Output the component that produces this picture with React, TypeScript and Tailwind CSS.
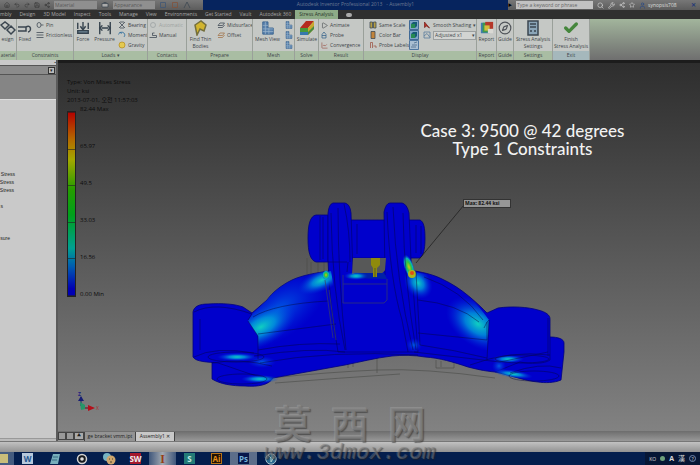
import type { ReactNode } from "react";
import {
  Search, Star, User, Wrench, Undo2, Redo2, Home, Save, Check, Compass, Share2, Play, LineChart,
} from "lucide-react";

type Kids = { children?: ReactNode };

function Group({ label, width, green = true, children }: Kids & { label: string; width: string; green?: boolean }) {
  return (
    <section className={`flex shrink-0 flex-col border-r border-[#9aa09a] ${width}`}>
      <div className="flex h-8 items-start gap-1 overflow-hidden px-px">{children}</div>
      <div className={`h-[9px] overflow-hidden whitespace-nowrap text-center leading-[8px] ${green ? "bg-[#a9bda3]" : "bg-[#a5b8bc]"}`}>
        {label}
      </div>
    </section>
  );
}

function Big({ icon, children, width = "w-5" }: Kids & { icon: ReactNode; width?: string }) {
  return (
    <button type="button" className={`flex shrink-0 flex-col items-center pt-px ${width}`}>
      <span className="flex h-4 w-4 items-center justify-center">{icon}</span>
      <span className="whitespace-nowrap text-center leading-[7px]">{children}</span>
    </button>
  );
}

function Small({ icon, children, faded = false }: Kids & { icon: ReactNode; faded?: boolean }) {
  return (
    <button type="button" className={`flex h-[10px] items-center gap-[2px] whitespace-nowrap ${faded ? "opacity-30" : ""}`}>
      <span className="flex h-2 w-2 items-center justify-center">{icon}</span>
      <span>{children}</span>
    </button>
  );
}

function Glyph({ d, stroke = "#3b4650", fill = "none", className = "h-2 w-2" }: { d: string; stroke?: string; fill?: string; className?: string }) {
  return (
    <svg viewBox="0 0 16 16" className={className} aria-hidden="true">
      <path d={d} stroke={stroke} fill={fill} strokeWidth="1.5" />
    </svg>
  );
}

function Column({ children }: Kids) {
  return <div className="flex shrink-0 flex-col pt-px">{children}</div>;
}

function MeshIcon({ className = "h-2 w-2" }: { className?: string }) {
  return (
    <svg viewBox="0 0 16 16" className={className} aria-hidden="true">
      <path d="M2 1h6v7h6v7H2z" fill="#5a82ad" stroke="#38618e" />
      <path d="M2 5h6M2 9h12M2 12h12M5 1v14M9 8v7" stroke="#9bb5cc" strokeWidth="0.8" />
    </svg>
  );
}

function CubeIcon({ className = "h-4 w-4" }: { className?: string }) {
  return (
    <svg viewBox="0 0 16 16" className={className} aria-hidden="true">
      <path d="M1 8 7 1h8L9 8z" fill="#b52c1f" />
      <path d="M1 8h8v7H1z" fill="#48993a" />
      <path d="M1 12h8v3H1z" fill="#3678ad" />
      <path d="M9 8l6-7v8l-6 6z" fill="#c9a92e" />
      <path d="M9 12l6-6v3l-6 6z" fill="#4a8a42" />
    </svg>
  );
}

function ReportIcon() {
  return (
    <svg viewBox="0 0 16 16" className="h-[14px] w-[14px]" aria-hidden="true">
      <path d="M1 2h10v12H1z" fill="#3f7db0" />
      <path d="M3 2h10v11H3z" fill="#3f9a4c" />
      <path d="M6 1h9v8H6z" fill="#b5382a" />
      <path d="M5 5h6v6H5z" fill="#d3bd3d" />
      <path d="M9 9h6v5H9z" fill="#d9d9d4" />
    </svg>
  );
}

function ScreenIcon() {
  return (
    <svg viewBox="0 0 10 10" className="h-[10px] w-[10px]" aria-hidden="true">
      <path d="M.5 .5h9v9h-9z" fill="#7fa5c8" stroke="#406a96" />
      <path d="M2 4 4 2h4v4L6 8H2z" fill="#175c73" />
      <path d="M2 4h4v4H2z" fill="#268a53" />
    </svg>
  );
}

function PaleScreenIcon() {
  return (
    <svg viewBox="0 0 10 10" className="h-[10px] w-[10px]" aria-hidden="true">
      <path d="M.5 .5h9v9h-9z" fill="#a9bfd2" stroke="#4d769f" />
      <path d="M2 7h5M3 5h5M5 3l3-1" stroke="#5c7b98" fill="none" />
    </svg>
  );
}

function ForceIcon({ double = false }: { double?: boolean }) {
  return (
    <svg viewBox="0 0 16 16" className="h-[14px] w-[14px]" aria-hidden="true">
      <path d={double ? "M2 1v14M14 1v14M4 8h8" : "M2 11h12v3H2zM8 1v8"} stroke="#36434e" fill="#6f8797" strokeWidth="1.6" />
      <path d={double ? "M5 5l-3 3 3 3M11 5l3 3-3 3" : "M5 6l3 4 3-4M2 2v7M14 2v7"} stroke="#36434e" fill="none" strokeWidth="1.6" />
    </svg>
  );
}

const menus = ["Design", "3D Model", "Inspect", "Tools", "Manage", "View", "Environments", "Get Started", "Vault", "Autodesk 360"];

function TitleBar() {
  return (
    <header className="flex h-[10px] items-center bg-linear-to-b from-[#777] to-[#5c5c5c] text-[#333]">
      <div className="flex w-[203px] shrink-0 items-center gap-[4px] pl-[4px]">
        <Home size={6} /><Undo2 size={6} /><Redo2 size={6} /><Save size={6} /><Share2 size={6} />
        <select aria-label="Material" className="h-2 w-[43px] appearance-none bg-[#8f8f8f] px-px text-[5px] leading-[8px] text-[#5a5a5a]">
          <option>Material</option>
        </select>
        <Glyph d="M2 5h12v7H2zM5 3h6" fill="#aaa" />
        <select aria-label="Appearance" className="h-2 w-[42px] appearance-none bg-[#8f8f8f] px-px text-[5px] leading-[8px] text-[#5a5a5a]">
          <option>Appearance</option>
        </select>
        <Glyph d="M3 3h10v10H3z" stroke="#3e5576" />
        <Glyph d="M3 3h10v10H3z" stroke="#835139" />
        <Glyph d="M2 14 8 2l6 12" />
      </div>
      <h1 className="h-[10px] min-w-0 flex-1 overflow-hidden whitespace-nowrap bg-[#06245e] text-center text-[5px] leading-[9px] text-[#6c7a94]">
        Autodesk Inventor Professional 2013 &nbsp; - Assembly1
      </h1>
      <div className="flex w-[192px] shrink-0 items-center gap-1 text-[#ddd]">
        <span className="text-[4px] text-black">▶</span>
        <input aria-label="Search help" placeholder="Type a keyword or phrase" className="h-2 w-[77px] bg-[#c2c2c2] px-px text-[5px] leading-[8px] placeholder:text-[#666]" />
        <Search size={7} /><Wrench size={7} /><Share2 size={6} /><Star size={6} />
        <User size={7} className="text-[#23488a]" />
        <span className="-ml-0.5 text-[5px] leading-[8px]">synopsis708</span>
        <span className="ml-auto mr-1 text-[6px] font-bold leading-[8px] text-[#243a78]">✕</span>
      </div>
    </header>
  );
}

function Ribbon() {
  return (
    <div className="flex h-[41px] bg-linear-to-b from-[#a2b59c] to-[#6f6f6f] text-[#41464a]">
      <div className="flex shrink-0 bg-[#c5c8c5]">
        <Group label="aterial" width="w-[17px]">
          <Big width="w-[13px]" icon={<Glyph className="h-4 w-4" d="M1 5l4-3 4 3-4 4zM7 10l4-4 4 4-4 4z" />}>esign</Big>
        </Group>
        <Group label="Constraints" width="w-[57px]">
          <Big width="w-[14px]" icon={<Glyph className="h-4 w-4" d="M1 7h8v4H1M9 7c5-3 6 4 2 5" />}>Fixed</Big>
          <Column>
            <Small icon={<Glyph d="M2 8a4 5 0 108 0 4 5 0 10-8 0M10 8h5" />}>Pin</Small>
            <Small icon={<Glyph d="M1 3h14M1 8h14M1 13h14" />}>Frictionless</Small>
          </Column>
        </Group>
        <Group label="Loads  ▾" width="w-[74px]">
          <Big width="w-4" icon={<ForceIcon />}>Force</Big>
          <Big width="w-[19px]" icon={<ForceIcon double />}>Pressure</Big>
          <Column>
            <Small icon={<Glyph d="M2 2l12 12M14 2 2 14M4 2h8M4 14h8" />}>Bearing</Small>
            <Small icon={<Glyph d="M4 4a5 5 0 118 8M1 7l3-5 4 3" stroke="#24679a" />}>Moment</Small>
            <Small icon={<Glyph d="M2 8a6 6 0 1012 0 6 6 0 10-12 0" fill="#e4ca51" stroke="#b58e20" />}>Gravity</Small>
          </Column>
        </Group>
        <Group label="Contacts" width="w-[39px]">
          <Column>
            <Small faded icon={<Glyph d="M3 8a5 5 0 1010 0 5 5 0 10-10 0" />}>Automatic</Small>
            <Small icon={<Glyph d="M1 13h14v-4H7V4h4" />}>Manual</Small>
          </Column>
        </Group>
        <Group label="Prepare" width="w-[66px]">
          <Big width="w-[25px]" icon={<Glyph className="h-4 w-4" d="M2 5 8 1l5 4-2 6-4-2-3 6z" fill="#d2b52f" stroke="#756f3c" />}>Find Thin<br />Bodies</Big>
          <Column>
            <Small icon={<Glyph d="M2 9 6 4h9l-4 5zM2 13h9l4-5" />}>Midsurface</Small>
            <Small icon={<Glyph d="M2 9 6 4h9l-4 5zM2 13h9l4-5" stroke="#a17245" />}>Offset</Small>
          </Column>
        </Group>
        <Group label="Mesh" width="w-[42px]">
          <Big width="w-[27px]" icon={<MeshIcon className="h-[14px] w-[14px]" />}>Mesh View</Big>
          <Column>
            {["Mesh settings", "Local mesh", "Convergence settings"].map((name) => (
              <button key={name} type="button" aria-label={name} className="flex h-[10px] items-center"><MeshIcon /></button>
            ))}
          </Column>
        </Group>
        <Group label="Solve" width="w-6">
          <Big width="w-[22px]" icon={<CubeIcon />}>Simulate</Big>
        </Group>
        <Group label="Result" width="w-[45px]">
          <Column>
            <Small icon={<Play size={7} />}>Animate</Small>
            <Small icon={<Glyph d="M4 14V7l4-5 4 5v7zM4 9h8" stroke="#35638b" />}>Probe</Small>
            <Small icon={<LineChart size={7} color="#94483d" />}>Convergence</Small>
          </Column>
        </Group>
        <Group label="Display" width="w-[113px]">
          <div className="w-px" />
          <div className="w-[36px]">
            <Column>
              <Small icon={<Glyph d="M2 2h5v12H2zM9 2h5v12H9z" fill="#b59d43" />}>Same Scale</Small>
              <Small icon={<Glyph d="M4 1h8v14H4z" fill="#c3843b" />}>Color Bar</Small>
              <Small icon={<Glyph d="M3 14V3h4v11M9 10h5v4" stroke="#9c5142" />}>Probe Labels</Small>
            </Column>
          </div>
          <Column>
            <button type="button" aria-label="Maximum value"><ScreenIcon /></button>
            <button type="button" aria-label="Minimum value"><ScreenIcon /></button>
            <button type="button" aria-label="Boundary conditions"><PaleScreenIcon /></button>
          </Column>
          <Column>
            <Small icon={<Glyph d="M3 2v11l4-3 6 4z" fill="#b83025" stroke="#7b2620" />}>Smooth Shading ▾</Small>
            <div className="flex h-[10px] items-center gap-[2px]">
              <Glyph d="M2 2h12v12H2zM2 10 8 5l6 8" stroke="#55799b" />
              <div className="flex h-[9px] w-[43px] items-center border border-[#9ca0a0] bg-[#d2d4d2]">
                <select aria-label="Displacement scale" className="h-[7px] flex-1 appearance-none px-px text-[5px] leading-[7px]">
                  <option>Adjusted x1</option>
                </select>
                <span aria-hidden="true">▾</span>
              </div>
            </div>
          </Column>
        </Group>
        <Group label="Report" width="w-5">
          <Big width="w-[17px]" icon={<ReportIcon />}>Report</Big>
        </Group>
        <Group label="Guide" width="w-[17px]">
          <Big width="w-[14px]" icon={<Compass size={14} color="#50545a" strokeWidth={2} />}>Guide</Big>
        </Group>
        <Group label="Settings" width="w-[39px]">
          <Big width="w-[36px]" icon={<Glyph className="h-4 w-4" d="M3 1h10v14H3zM5 4h6M5 7h6M5 11h2M9 11h2" fill="#8ba5b8" />}>Stress Analysis<br />Settings</Big>
        </Group>
        <Group label="Exit" width="w-[37px]" green={false}>
          <Big width="w-[34px]" icon={<Check size={16} color="#45863c" strokeWidth={5} />}>Finish<br />Stress Analysis</Big>
        </Group>
      </div>
    </div>
  );
}

function Model() {
  return (
    <svg viewBox="58 63 642 368" className="absolute inset-0 h-full w-full" role="img" aria-label="Bracket stress model">
      <defs>
        <radialGradient id="glow"><stop offset="0" stopColor="#10cfc0" /><stop offset="0.4" stopColor="#00a0dc" stopOpacity="0.8" /><stop offset="1" stopColor="#0030e0" stopOpacity="0" /></radialGradient>
        <radialGradient id="haze"><stop offset="0" stopColor="#0070e8" stopOpacity="0.8" /><stop offset="1" stopColor="#0030e0" stopOpacity="0" /></radialGradient>
        <radialGradient id="hot"><stop offset="0" stopColor="#d3c20d" /><stop offset="0.4" stopColor="#2cc544" /><stop offset="0.7" stopColor="#08aebd" /><stop offset="1" stopColor="#003ce0" stopOpacity="0" /></radialGradient>
        <clipPath id="leftArm"><path d="M331 271C315 273 303 275 292 280C280 286 272 293 267 300L252 314 248 321 258 336V350H340L336 300z" /></clipPath>
        <clipPath id="rightArm"><path d="M403 258H412L415 272C426 274 434 275 442 279C462 288 478 304 489 320L487 352 410 350z" /></clipPath>
      </defs>
      <g fill="none" stroke="#4a4c48" strokeWidth="0.6">
        <path d="M270 378Q330 372 377 370T495 378M275 383Q340 378 400 374M377 358v15M436 360v8h18v-8M441 361v6M348 352v16M353 352v15M307 258v16M311 262v14M318 262v12M324 262v10" />
      </g>
      <g fill="#0000cc" stroke="#000080" strokeWidth="0.8">
        <path d="M212 361V379C220 384 232 386 245 386C258 387 269 385 273 378L274 360z" />
        <path d="M550 337C558 337 564 339 564 343V352L561 380C554 383 545 383 538 382C525 381 510 375 495 372L500 352z" />
        <path d="M193 357V312C194 306 200 304 208 304C222 303 235 304 243 307L252 313 267 300C272 293 280 286 292 280C303 275 315 273 330 271H415C426 273 434 275 442 279C462 288 478 304 487 313L498 308C512 306 528 307 538 310C546 312 550 315 550 319V360C545 364 530 364 520 362L495 372C484 371 476 369 468 367C453 362 440 358 425 357C414 355 402 355 392 356C375 358 360 362 345 365L273 378C260 379 240 370 218 363C208 362 196 362 193 357z" />
        <path d="M348 220H390V258H348z" />
        <path d="M328 215H316C310 216 308 225 308 238C308 252 310 260 316 262H328z" />
        <path d="M405 220H420C424 222 425 228 425 239C425 250 423 256 420 258H405z" />
        <path d="M328 213Q329 204 333 203H345Q350 204 351 213L353 275H385L384 212Q386 203 390 203H402Q407 204 409 213L411 260 418 352H345L338 352Q329 300 328 260z" />
      </g>
      <path d="M353 258h33l-1 12q-2 4-7 4h-26z" fill="#575858" />
      <path d="M347 278 355 273h29l3 6z" fill="#0020a8" />
      <g clipPath="url(#leftArm)">
        <ellipse cx="278" cy="310" rx="56" ry="28" transform="rotate(-35 278 310)" fill="url(#haze)" />
        <ellipse cx="261" cy="327" rx="38" ry="19" transform="rotate(-28 261 327)" fill="url(#glow)" />
        <ellipse cx="322" cy="280" rx="26" ry="11" transform="rotate(-25 322 280)" fill="url(#glow)" />
      </g>
      <g clipPath="url(#rightArm)">
        <ellipse cx="478" cy="324" rx="36" ry="22" transform="rotate(35 478 324)" fill="url(#glow)" />
        <ellipse cx="418" cy="283" rx="13" ry="17" transform="rotate(-35 418 283)" fill="url(#glow)" />
      </g>
      <ellipse cx="409" cy="267" rx="5" ry="13" transform="rotate(-18 409 267)" fill="url(#hot)" />
      <circle cx="412" cy="274" r="4" fill="#a8b71c" />
      <circle cx="412" cy="273" r="2" fill="#df4e12" />
      <ellipse cx="326" cy="275" rx="4" ry="5" fill="url(#hot)" />
      <g fill="url(#glow)">
        <ellipse cx="237" cy="357" rx="20" ry="4" /><ellipse cx="260" cy="379" rx="19" ry="4" />
        <ellipse cx="508" cy="359" rx="16" ry="4" /><ellipse cx="513" cy="374" rx="20" ry="4" transform="rotate(8 513 374)" />
        <ellipse cx="356" cy="276" rx="12" ry="4" />
      </g>
      <g fill="url(#haze)"><ellipse cx="499" cy="366" rx="7" ry="7" /><ellipse cx="262" cy="362" rx="14" ry="6" /><ellipse cx="414" cy="345" rx="8" ry="7" /></g>
      <g fill="none" stroke="#06063a" strokeWidth="0.6" opacity="0.75">
        <path d="M194 312Q215 301 252 314M200 319v31M194 357Q215 346 254 353M212 363Q240 358 272 366M248 321 258 336V359M252 314 248 320M258 334 336 324M253 317Q274 304 328 301M331 213Q332 290 345 350M338 208Q338 280 346 350M344 204Q350 230 350 262M320 216v44M323 217v42M348 262 347 272M258 350Q300 342 340 344M254 356Q310 347 345 352M260 363Q330 350 418 355M387 212Q390 280 402 320L408 352M393 207Q396 280 413 350M403 213Q404 280 416 350M416 272 420 345M418 300Q458 304 479 322M418 333 487 340V322L489 320M420 345Q455 350 487 358M487 322 484 328M489 320 487 360M424 277Q462 290 483 320M414 352 500 362 548 352M470 365Q510 350 550 355M510 373Q540 362 561 368M548 318v38M357 224v30M416 225v28M421 226v28M328 262H347" />
        <ellipse cx="236" cy="357" rx="28" ry="5" /><ellipse cx="242" cy="379" rx="25" ry="5" /><ellipse cx="522" cy="359" rx="27" ry="4" /><ellipse cx="534" cy="376" rx="25" ry="5" />
      </g>
      <g fill="none" stroke="#383d6a" strokeWidth="0.7">
        <path d="M343 275V303H384L387 300V279M343 284H387M325 280 333 338M329 290 336 340" />
      </g>
      <path d="M371 258h9v7l-3 3v9h-4v-9l-2-3z" fill="#8f8a0c" />
      <path d="M375 268v9" stroke="#575d18" />
      <path d="M416 263 464 205" stroke="#222" strokeWidth="0.8" />
      <path d="M81 406V397M81 408h10" stroke="#263c68" strokeWidth="1.2" />
      <path d="M83 408h8" stroke="#9a2020" />
      <path d="m78 401 3-5 3 5z" fill="#171d73" />
      <path d="m80 402 5 3v4l-4 1z" fill="#259769" />
      <path d="m88 405 7 3-7 3z" fill="#b50f1a" />
    </svg>
  );
}

const legend = ["82.44 Max", "65.97", "49.5", "33.03", "16.56", "0.00 Min"];

function Viewport() {
  return (
    <div className="relative min-h-0 flex-1 overflow-hidden bg-linear-to-b from-[#2e2e2e] via-[#575757] to-[#828282]">
      <Model />
      <div className="absolute left-[9px] top-[15px] text-[6px] leading-[9px] text-[#0c0c0c]">
        <p>Type: Von Mises Stress</p>
        <p>Unit: ksi</p>
        <p>2013-07-01, 오전 11:57:03</p>
        <div className="mt-[6px] flex h-[186px] gap-1">
          <div className="flex w-[9px] flex-col justify-between border border-[#222] bg-[linear-gradient(#b40000,#b46a00_15%,#a3a800_26%,#269c00_42%,#00a01c_56%,#00a092_74%,#005bb0_84%,#0000b4_96%)]">
            {legend.map((v) => <span key={v} className="h-px bg-[#222]/60" />)}
          </div>
          <ul className="-mb-0.5 -mt-1.5 flex flex-col justify-between">
            {legend.map((v) => <li key={v}>{v}</li>)}
          </ul>
        </div>
      </div>
      <div className="absolute left-[343px] top-[59px] w-[243px] whitespace-nowrap text-center font-[Lato,sans-serif] text-[17px] font-medium leading-[18px] text-[#f2f2f2]">
        <p>Case 3: 9500 @ 42 degrees</p>
        <p>Type 1 Constraints</p>
      </div>
      <p className="absolute left-[405px] top-[136px] h-[9px] w-[48px] border border-[#333] bg-[#969696] px-px text-[5px] font-bold leading-[7px] text-[#111]">
        Max: 82.44 ksi
      </p>
      <span className="absolute left-[20px] top-[328px] text-[5px] font-bold leading-[6px] text-[#202080]">Z</span>
      <span className="absolute left-[38px] top-[342px] text-[5px] leading-[6px] text-[#a63030]">X</span>
    </div>
  );
}

const tree = [
  { text: "Stress", gap: "mt-[70px] w-[15px]" },
  { text: "Stress", gap: "w-[14px]" },
  { text: "Stress", gap: "w-[14px]" },
  { text: "s", gap: "mt-2 w-[3px]" },
  { text: "sure", gap: "mt-6 w-[10px]" },
];

function Browser() {
  return (
    <aside className="flex w-[58px] shrink-0 flex-col border-r-2 border-[#5b5b5b] bg-[#c9c9c9] font-['Liberation_Sans',sans-serif] text-[5px] text-[#222]">
      <div className="flex h-[5px] justify-end text-[4px] leading-[5px]">▪</div>
      <div className="flex h-[10px] items-center justify-end border-y border-[#555] bg-[#8b8b8b] pr-px">
        <button type="button" aria-label="Filter" className="flex h-[7px] w-[7px] items-center justify-center border border-[#333] bg-[#bbb] text-[5px] leading-[5px]">▾</button>
      </div>
      <div className="h-6 bg-[#858585]" />
      <ul className="flex min-h-0 flex-1 flex-col border-t border-[#ddd]">
        {tree.map((row, i) => (
          <li key={i} className={`flex h-2 shrink-0 items-center justify-end whitespace-nowrap ${row.gap}`}>{row.text}</li>
        ))}
      </ul>
      <div className="h-[3px] border-t border-[#999] bg-[#bbb]" />
    </aside>
  );
}

function Taskbar() {
  const cell = "flex h-[13px] w-[27px] shrink-0 items-center justify-center";
  const lit = "bg-linear-to-r from-[#40577b] via-[#a3a9b0] to-[#40577b]";
  const tile = "flex h-[11px] w-[11px] items-center justify-center text-[8px] font-bold leading-[10px]";
  return (
    <footer className="flex h-[13px] items-center overflow-hidden bg-[#041e4d]">
      <nav aria-label="Taskbar" className="flex">
        <button type="button" aria-label="Files" className="flex h-[13px] w-[14px] items-center bg-[#445b7f]"><span className="h-[9px] w-2 bg-[#c9bd7a]" /></button>
        <button type="button" className={cell}><span className={`${tile} bg-[#b6c8dc] text-[#25558f]`}>W</span></button>
        <button type="button" aria-label="Notes" className={cell}><svg viewBox="0 0 12 12" className="h-3 w-3"><path d="M4 1h7l-2 10H1z" fill="#77aebb" /><path d="M4 4h5M3 7h5" stroke="#376c83" /></svg></button>
        <button type="button" aria-label="Target" className={cell}><svg viewBox="0 0 12 12" className="h-3 w-3"><circle cx="6" cy="6" r="4.5" fill="#17191d" stroke="#d3d3d3" strokeWidth="1.5" /><circle cx="6" cy="6" r="1.8" fill="#ddd" /></svg></button>
        <button type="button" aria-label="Messenger" className={cell}><svg viewBox="0 0 14 12" className="h-3 w-[14px]"><circle cx="5" cy="4" r="4" fill="#75b3c2" /><circle cx="9" cy="7" r="4.5" fill="#cda56d" /><path d="M7 6h1M10 6h1M8 9h2" stroke="#443" /></svg></button>
        <button type="button" className={cell}><span className={`${tile} bg-[#a5192d] text-[7px] text-[#eee]`}>SW</span></button>
        <button type="button" className={`${cell} ${lit}`}><span className={`${tile} font-['Liberation_Serif',serif] text-[12px] text-[#963e16]`}>I</span></button>
        <button type="button" className={cell}><span className={`${tile} bg-[#237b77] text-[#c3eae2]`}>S</span></button>
        <button type="button" className={cell}><span className={`${tile} border border-[#b57317] bg-[#211204] text-[7px] text-[#e58f18]`}>Ai</span></button>
        <button type="button" className={`${cell} bg-[#5c6e8a]`}><span className={`${tile} bg-[#07184b] text-[7px] text-[#74b1d9]`}>Ps</span></button>
        <button type="button" aria-label="Globe" className={cell}><svg viewBox="0 0 12 12" className="h-3 w-3"><circle cx="6" cy="6" r="5.2" fill="#2b6a91" stroke="#a9c1cc" /><path d="M3 2l3 3v4l3-5" stroke="#aed0ce" fill="none" /></svg></button>
      </nav>
      <div className="ml-auto flex h-full items-center gap-1 bg-[#061635] px-1 text-[7px] leading-[10px] text-[#dadada]">
        <span className="text-[5px]">KO</span>
        <span className="h-[5px] w-[5px] rounded-full bg-[#6d9f7b]" />
        <span className="font-bold">A</span>
        <span>漢</span>
        <span className="flex h-[7px] w-[7px] items-center justify-center rounded-full border border-[#7188ae] text-[5px]">?</span>
      </div>
    </footer>
  );
}

export default function App() {
  return (
    <div className="relative flex h-screen flex-col overflow-hidden bg-[#2b2b2b] font-['Open_Sans','Noto_Sans_CJK_KR',sans-serif] text-[5px] leading-[7px]">
      <TitleBar />
      <nav aria-label="Ribbon tabs" className="flex h-[9px] shrink-0 items-center gap-2 whitespace-nowrap bg-[#303030] text-[#a8a8a8]">
        <button type="button">mbly</button>
        {menus.map((m) => <button key={m} type="button">{m}</button>)}
        <button type="button" className="-ml-1 h-[9px] bg-[#8eab87] px-1 text-[#29362a]">Stress Analysis</button>
        <button type="button" aria-label="Ribbon options" className="h-1 w-[6px] rounded-sm bg-[#aaa]" />
      </nav>
      <Ribbon />
      <div className="flex min-h-0 flex-1">
        <Browser />
        <main className="flex min-w-0 flex-1 flex-col border-t-[3px] border-[#1c1c1c]">
          <Viewport />
          <div className="flex h-[10px] items-center bg-linear-to-b from-[#6d6d6d] to-[#999] text-[#202020]">
            <button type="button" aria-label="Cascade" className="h-2 w-2 border border-[#444] bg-[#999]" />
            <button type="button" aria-label="Arrange" className="h-2 w-2 border border-[#444] bg-[#999]" />
            <button type="button" aria-label="More" className="h-2 w-[10px] border border-[#444] bg-[#aaa] text-[4px] leading-[6px]">▲</button>
            <button type="button" className="h-[9px] w-[52px] whitespace-nowrap border-x border-[#444] bg-[#939393]">ge bracket vmm.ipt</button>
            <button type="button" className="h-[9px] w-[39px] whitespace-nowrap border-r border-[#444] bg-[#c8c8c8]">Assembly1 ✕</button>
          </div>
        </main>
      </div>
      <div className="h-[11px] shrink-0 border-t border-[#777] bg-linear-to-b from-[#c2c2c2] to-[#929292]" />
      <Taskbar />
      <div className="pointer-events-none absolute bottom-0 left-1/2 flex -translate-x-1/2 flex-col items-center text-[#808080]/60">
        <div className="flex gap-[19px] font-['Noto_Sans_CJK_SC',sans-serif] text-[38px] font-medium leading-[42px] [text-shadow:-1px_-1px_0_#aaaaaa66,1px_1px_1px_#33333399]">
          <span>莫</span><span>西</span><span>网</span>
        </div>
        <span className="font-['Liberation_Mono',monospace] text-[22px] italic leading-[22px] text-[#777]/50 [text-shadow:-1px_-1px_0_#aaaaaa44,1px_1px_1px_#22222288]">www.3dmox.com</span>
      </div>
    </div>
  );
}
